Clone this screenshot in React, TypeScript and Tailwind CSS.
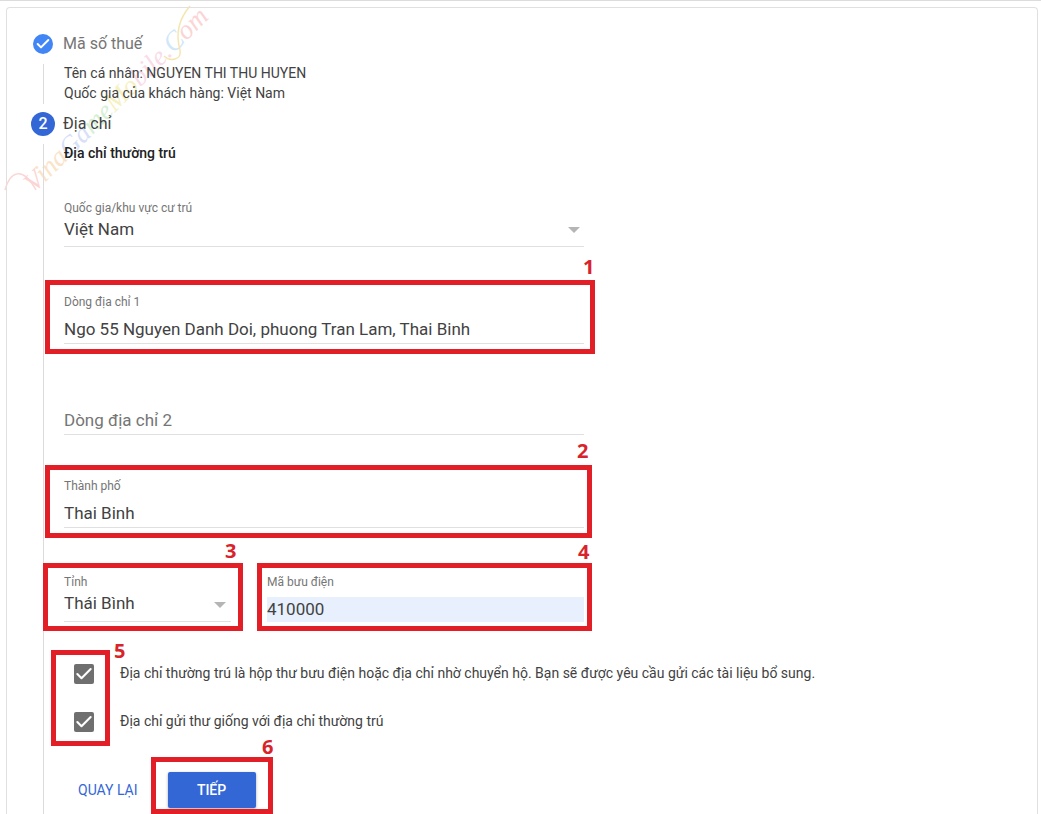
import { Check } from "lucide-react";

const InputField = ({ label, value, className = "" }: { label: string; value: string; className?: string }) => (
  <div className={`border-b border-[#e0e0e0] ${className}`}>
    <div className="h-[16px] text-[12px] leading-[18px] text-[#757575]">{label}</div>
    <div className="mt-[6px] h-[28px] text-[17px] leading-[28px] text-[#424242]">{value}</div>
  </div>
);

const SelectField = ({ label, value, className = "", arrow = "" }: { label: string; value: string; className?: string; arrow?: string }) => (
  <div className={`relative border-b border-[#e0e0e0] ${className}`}>
    <div className="h-[16px] text-[12px] leading-[18px] text-[#757575]">{label}</div>
    <div className="h-[31px] text-[17px] leading-[29px] text-[#424242]">{value}</div>
    <div className={`absolute h-0 w-0 border-x-[6.5px] border-t-[6px] border-x-transparent border-t-[#b5b5b5] ${arrow}`} />
  </div>
);

const CheckRow = ({ text }: { text: string }) => (
  <div className="flex h-[24px] items-center">
    <div className="ml-[10px] flex h-[20px] w-[20px] items-center justify-center rounded-[2px] bg-[#6f6f6f]">
      <Check size={20} strokeWidth={2.5} className="text-white" />
    </div>
    <span className="ml-[26px] -translate-y-px text-[14px] text-[#424242]">{text}</span>
  </div>
);

const boxes = [
  "left-[45px] top-[280px] h-[74px] w-[550px]",
  "left-[45px] top-[465px] h-[73px] w-[547px]",
  "left-[43px] top-[563px] h-[68px] w-[200px]",
  "left-[257px] top-[563px] h-[68px] w-[335px]",
  "left-[51px] top-[650px] h-[96px] w-[59px]",
  "left-[151px] top-[757px] h-[57px] w-[122px]",
];

const marks = [
  { n: "1", cls: "left-[583px] top-[254px]" },
  { n: "2", cls: "left-[577px] top-[438px]" },
  { n: "3", cls: "left-[225px] top-[538px]" },
  { n: "4", cls: "left-[578px] top-[539px]" },
  { n: "5", cls: "left-[114px] top-[638px]" },
  { n: "6", cls: "left-[262px] top-[734px]" },
];

const watermark = [
  { t: "V", cls: "text-[#fbd5d5]" },
  { t: "ina", cls: "text-[#fae3c8]" },
  { t: "Ga", cls: "text-[#d8dff8]" },
  { t: "me", cls: "text-[#d5f0d5]" },
  { t: "Mo", cls: "text-[#f5f1c0]" },
  { t: "bile", cls: "text-[#f9dbe9]" },
  { t: ".", cls: "text-[#f9dbe9]" },
  { t: "C", cls: "text-[#cfe7f9]" },
  { t: "om", cls: "text-[#fbd5d5]" },
];

export default function App() {
  return (
    <div className="relative h-[814px] w-[1041px] overflow-hidden bg-white font-['Roboto',sans-serif]">
      {/* watermark */}
      <div className="pointer-events-none absolute left-[-8px] top-[79px] -rotate-[45deg] whitespace-nowrap font-['Liberation_Serif',serif] text-[27px] italic">
        {watermark.map((w) => (
          <span key={w.t} className={w.cls}>{w.t}</span>
        ))}
      </div>
      <svg className="pointer-events-none absolute left-0 top-0" width="230" height="210" fill="none" strokeWidth="1.5">
        <path d="M5 190 C10 172 22 165 36 190" stroke="#fbd5d5" />
        <path d="M190 6 C178 20 176 36 180 50 C182 60 170 62 164 56" stroke="#f5e6b0" />
      </svg>

      <div className="relative">
        <div className="h-px bg-[#dcdcdc]" />
        <div className="ml-[6px] mr-[3px] mt-[6px] h-[820px] rounded-t-[4px] border border-b-0 border-[#e0e0e0] pt-[26px]">
          <div className="ml-[26px] flex h-[20px] items-center">
            <div className="flex h-[20px] w-[20px] items-center justify-center rounded-full bg-[#4285f4]">
              <Check size={16} strokeWidth={3} className="text-white" />
            </div>
            <span className="ml-[10px] text-[16px] text-[#757575]">Mã số thuế</span>
          </div>

          <div className="ml-[36px] mt-[10px] h-[40px] border-l border-[#dcdcdc] pl-[20px] text-[14px] leading-[20px] text-[#424242]">
            <div className="-translate-y-px">Tên cá nhân: NGUYEN THI THU HUYEN</div>
            <div className="-translate-y-px">Quốc gia của khách hàng: Việt Nam</div>
          </div>

          <div className="ml-[24px] mt-[8px] flex h-[24px] items-center">
            <div className="flex h-[24px] w-[24px] items-center justify-center rounded-full bg-[#3367d6] text-[16px] font-medium text-white">2</div>
            <span className="ml-[8px] text-[16px] text-[#424242]">Địa chỉ</span>
          </div>

          <div className="ml-[36px] mt-[8px] h-[680px] border-l border-[#dcdcdc] pl-[20px]">
            <div className="h-[18px] text-[14px] font-medium leading-[18px] text-[#212121]">Địa chỉ thường trú</div>

            <div className="w-[520px]">
              <SelectField label="Quốc gia/khu vực cư trú" value="Việt Nam" className="mt-[37px]" arrow="right-[4px] top-[28px]" />

              <InputField label="Dòng địa chỉ 1" value="Ngo 55 Nguyen Danh Doi, phuong Tran Lam, Thai Binh" className="mt-[46px]" />

              <div className="mt-[62px] h-[29px] border-b border-[#e0e0e0] text-[17px] leading-[28px] text-[#757575]">Dòng địa chỉ 2</div>

              <InputField label="Thành phố" value="Thai Binh" className="mt-[42px]" />

              <div className="mt-[45px] flex gap-[36px]">
                <SelectField label="Tỉnh" value="Thái Bình" className="w-[167px]" arrow="right-[5px] top-[29px]" />
                <div className="flex-1">
                  <div className="h-[16px] text-[12px] leading-[18px] text-[#757575]">Mã bưu điện</div>
                  <div className="mt-[8px] h-[25px] bg-[#e8f0fe] text-[17px] leading-[25px] text-[#424242]">410000</div>
                </div>
              </div>
            </div>

            <div className="mt-[40px] flex flex-col gap-[24px]">
              <CheckRow text="Địa chỉ thường trú là hộp thư bưu điện hoặc địa chỉ nhờ chuyển hộ. Bạn sẽ được yêu cầu gửi các tài liệu bổ sung." />
              <CheckRow text="Địa chỉ gửi thư giống với địa chỉ thường trú" />
            </div>

            <div className="ml-[14px] mt-[38px] flex items-center gap-[30px]">
              <span className="text-[14px] text-[#3367d6]">QUAY LẠI</span>
              <button className="h-[36px] w-[88px] rounded-[2px] bg-[#3367d6] text-[14px] font-medium text-white shadow-[0_1px_3px_rgba(0,0,0,0.35)]">TIẾP</button>
            </div>
          </div>
        </div>
      </div>

      {/* red annotations */}
      {boxes.map((b) => (
        <div key={b} className={`absolute border-[5px] border-[#e21f26] ${b}`} />
      ))}
      {marks.map((m) => (
        <span key={m.n} className={`absolute font-['Open_Sans',sans-serif] text-[20px] font-bold leading-[26px] text-[#d9232a] ${m.cls}`}>{m.n}</span>
      ))}
    </div>
  );
}
